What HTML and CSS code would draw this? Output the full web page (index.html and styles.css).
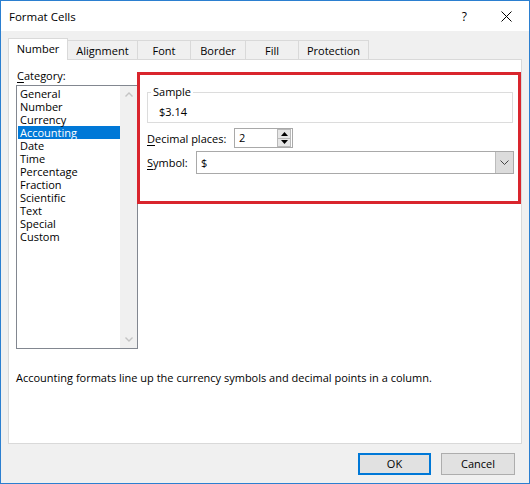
FILE: index.html
```html
<!DOCTYPE html>
<html>
<head>
<meta charset="utf-8">
<title>Format Cells</title>
<link rel="stylesheet" href="styles.css">
</head>
<body>
<div class="window">
  <div class="titlebar">
    <span class="title">Format Cells</span>
    <span class="help">?</span>
    <svg class="close" width="11" height="11" viewBox="0 0 11 11"><path d="M0.5 0.5L10.5 10.5M10.5 0.5L0.5 10.5" stroke="#000" stroke-width="1" fill="none"/></svg>
  </div>
  <div class="client">
    <div class="tabs">
      <div class="tab active t-number">Number</div>
      <div class="tab t-align">Alignment</div>
      <div class="tab t-font">Font</div>
      <div class="tab t-border">Border</div>
      <div class="tab t-fill">Fill</div>
      <div class="tab t-prot">Protection</div>
    </div>
    <div class="panel">
      <div class="columns">
        <div class="left">
          <div class="cat-label"><u>C</u>ategory:</div>
          <div class="listbox">
            <ul class="items">
              <li>General</li>
              <li>Number</li>
              <li>Currency</li>
              <li class="selected">Accounting</li>
              <li>Date</li>
              <li>Time</li>
              <li>Percentage</li>
              <li>Fraction</li>
              <li>Scientific</li>
              <li>Text</li>
              <li>Special</li>
              <li>Custom</li>
            </ul>
            <div class="vscroll">
              <span class="sb-btn"><svg width="8" height="5" viewBox="0 0 8 5"><path d="M0.5 4.5L4 1L7.5 4.5" fill="none" stroke="#c4c4c4" stroke-width="1.4"/></svg></span>
              <span class="sb-btn"><svg width="8" height="5" viewBox="0 0 8 5"><path d="M0.5 0.5L4 4L7.5 0.5" fill="none" stroke="#c4c4c4" stroke-width="1.4"/></svg></span>
            </div>
          </div>
        </div>
        <div class="right">
          <fieldset class="sample">
            <legend>Sample</legend>
            <div class="sample-value">$3.14</div>
          </fieldset>
          <div class="row row-decimal">
            <span class="lbl lbl-decimal"><u>D</u>ecimal places:</span>
            <div class="spin">
              <span class="spin-value">2</span>
              <div class="spin-btns">
                <span class="spin-btn"><svg width="7" height="4" viewBox="0 0 7 4"><polygon points="0,4 3.5,0 7,4" fill="#000"/></svg></span>
                <span class="spin-btn"><svg width="7" height="4" viewBox="0 0 7 4"><polygon points="0,0 7,0 3.5,4" fill="#000"/></svg></span>
              </div>
            </div>
          </div>
          <div class="row row-symbol">
            <span class="lbl lbl-symbol"><u>S</u>ymbol:</span>
            <div class="combo">
              <span class="combo-value">$</span>
              <span class="combo-btn"><svg width="9" height="5" viewBox="0 0 9 5"><path d="M0.5 0.5L4.5 4.5L8.5 0.5" fill="none" stroke="#444" stroke-width="1"/></svg></span>
            </div>
          </div>
        </div>
      </div>
      <p class="desc">Accounting formats line up the currency symbols and decimal points in a column.</p>
      <div class="highlight"></div>
    </div>
    <div class="footer">
      <button class="btn btn-ok">OK</button>
      <button class="btn">Cancel</button>
    </div>
  </div>
</div>
</body>
</html>
```

FILE: styles.css
```css
* { box-sizing: border-box; }
html, body { margin: 0; padding: 0; }
body {
  width: 530px;
  height: 484px;
  overflow: hidden;
  font-family: "Open Sans", "Noto Sans", sans-serif;
  font-size: 11px;
  color: #000;
  background: #fff;
}
.window {
  width: 530px;
  height: 484px;
  border: 1px solid #2b7fd0;
  display: flex;
  flex-direction: column;
  background: #f0f0f0;
}
.titlebar {
  height: 30px;
  flex: none;
  background: #fff;
  display: flex;
  align-items: center;
  padding-left: 8px;
}
.title { font-size: 11.5px; }
.help { margin-left: auto; margin-right: 34px; font-size: 12px; }
.close { margin-right: 17px; }

.client {
  flex: 1;
  display: flex;
  flex-direction: column;
  padding: 7px 7px 8px 7px;
}
.tabs {
  height: 21px;
  flex: none;
  display: flex;
  align-items: flex-end;
  position: relative;
  z-index: 2;
}
.tab {
  height: 19px;
  border: 1px solid #d9d9d9;
  border-bottom: none;
  background: #f0f0f0;
  display: flex;
  align-items: center;
  justify-content: center;
  margin-left: -1px;
  line-height: 15px;
}
.tab:first-child { margin-left: 0; }
.tab.active {
  height: 22px;
  margin-bottom: -1px;
  background: #fff;
  padding-bottom: 2px;
}
.t-number { width: 60px; }
.t-align { width: 71px; }
.t-font { width: 54px; }
.t-border { width: 56px; }
.t-fill { width: 54px; }
.t-prot { width: 71px; }

.panel {
  height: 385px;
  flex: none;
  border: 1px solid #d9d9d9;
  background: #fff;
  position: relative;
  padding: 8px 8px 0 7px;
}
.columns { display: flex; }
.left { width: 122px; flex: none; }
.cat-label { line-height: 15px; margin-bottom: 2px; padding-left: 1px; }
u { text-decoration: underline; text-underline-offset: 2px; }
.listbox {
  height: 264px;
  border: 1px solid #828790;
  display: flex;
  background: #fff;
}
.items {
  flex: 1;
  list-style: none;
  margin: 0;
  padding: 1px 0 0 1px;
}
.items li {
  height: 13px;
  line-height: 13px;
  padding-left: 2px;
  white-space: nowrap;
}
.items li.selected { background: #0078d7; color: #fff; }
.vscroll {
  width: 17px;
  background: #f0f0f0;
  display: flex;
  flex-direction: column;
  justify-content: space-between;
}
.sb-btn {
  height: 17px;
  display: flex;
  align-items: center;
  justify-content: center;
}

.right {
  flex: 1;
  margin-left: 9px;
}
.sample {
  margin: 17px 0 0;
  padding: 0 0 3px 11px;
  border: 1px solid #dcdcdc;
  min-width: 0;
}
.sample legend {
  padding: 0 2px;
  margin-left: -8px;
  line-height: 14px;
}
.sample-value { line-height: 15px; margin-top: 5px; }
.row { display: flex; align-items: center; }
.row-decimal { height: 20px; margin-top: 5px; }
.row-symbol { height: 23px; margin-top: 3px; }
.lbl { flex: none; line-height: 15px; }
.lbl-decimal { width: 87px; }
.lbl-symbol { width: 49px; }
.spin {
  width: 59px;
  height: 20px;
  border: 1px solid #a9a9a9;
  display: flex;
  align-items: stretch;
  background: #fff;
}
.spin-value { flex: 1; padding-left: 4px; line-height: 18px; }
.spin-btns {
  width: 15px;
  display: flex;
  flex-direction: column;
  padding: 0 1px 0 0;
  gap: 0;
}
.spin-btn {
  flex: 1;
  background: #e6e6e6;
  border: 1px solid #b9b9b9;
  display: flex;
  align-items: center;
  justify-content: center;
}
.spin-btn + .spin-btn { border-top: none; }
.combo {
  flex: 1;
  height: 23px;
  margin-right: -1px;
  border: 1px solid #a9a9a9;
  display: flex;
  align-items: stretch;
  background: #fff;
}
.combo-value { flex: 1; padding-left: 4px; line-height: 21px; }
.combo-btn {
  width: 18px;
  background: #dcdcdc;
  border-left: 1px solid #bcbcbc;
  display: flex;
  align-items: center;
  justify-content: center;
}
.desc {
  margin: 21px 0 0;
  line-height: 15px;
}
.highlight {
  position: absolute;
  left: 128px;
  top: 12px;
  width: 384px;
  height: 132px;
  border: 3px solid #d9252d;
}
.footer {
  display: flex;
  justify-content: flex-end;
  gap: 10px;
  padding: 9px 7px 0 0;
}
.btn {
  width: 73px;
  height: 22px;
  font-family: inherit;
  font-size: 11px;
  color: #000;
  background: #e1e1e1;
  border: 1px solid #adadad;
  padding: 0;
  line-height: 18px;
}
.btn + .btn { width: 74px; }
.btn-ok { border: 2px solid #0078d7; }
```
